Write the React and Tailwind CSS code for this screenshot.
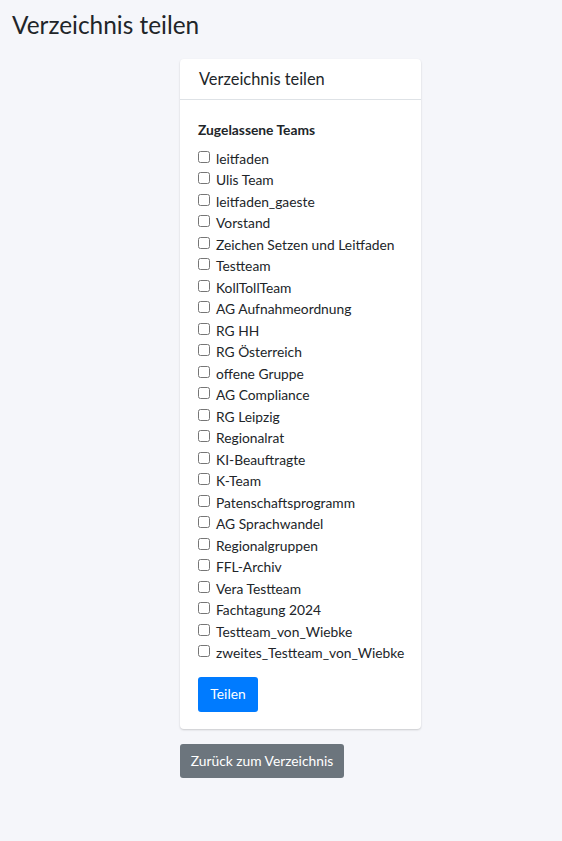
const teams = [
  "leitfaden",
  "Ulis Team",
  "leitfaden_gaeste",
  "Vorstand",
  "Zeichen Setzen und Leitfaden",
  "Testteam",
  "KollTollTeam",
  "AG Aufnahmeordnung",
  "RG HH",
  "RG Österreich",
  "offene Gruppe",
  "AG Compliance",
  "RG Leipzig",
  "Regionalrat",
  "KI-Beauftragte",
  "K-Team",
  "Patenschaftsprogramm",
  "AG Sprachwandel",
  "Regionalgruppen",
  "FFL-Archiv",
  "Vera Testteam",
  "Fachtagung 2024",
  "Testteam_von_Wiebke",
  "zweites_Testteam_von_Wiebke",
]

export default function App() {
  return (
    <div
      className="min-h-[841px] bg-[#f5f6fa] text-[#212529] pb-10"
      style={{ fontFamily: "Lato, 'Noto Sans', sans-serif" }}
    >
      <h1 className="px-3 pt-[10px] text-[24.4px] leading-[1.2] font-normal">Verzeichnis teilen</h1>

      <div className="ml-[180px] mt-[20px] w-[241px]">
        <div className="bg-white rounded-[4px] shadow-[0_1px_2px_rgba(0,0,0,0.18)]">
          <div className="px-[19px] h-[41px] flex items-center border-b border-[#dee2e6] text-[16.4px] pt-[1px]">
            Verzeichnis teilen
          </div>
          <div className="px-[18px] pt-[20px] pb-[17px]">
            <div className="font-bold text-[13.8px] leading-[1.5] mb-[7px]">Zugelassene Teams</div>
            <div className="flex flex-col">
              {teams.map((t) => (
                <label key={t} className="flex items-center gap-[6px] text-[13.8px] leading-[21.5px]">
                  <input type="checkbox" className="m-0 w-[12px] h-[12px] -translate-y-[2px]" />
                  <span>{t}</span>
                </label>
              ))}
            </div>
            <button className="mt-[13px] h-[35px] w-[60px] bg-[#007bff] text-white rounded-[3px] text-[13.8px]">
              Teilen
            </button>
          </div>
        </div>
        <button className="mt-[15px] h-[34px] w-[164px] bg-[#6c757d] text-white rounded-[3px] text-[13.8px] whitespace-nowrap">
          Zurück zum Verzeichnis
        </button>
      </div>
    </div>
  )
}
